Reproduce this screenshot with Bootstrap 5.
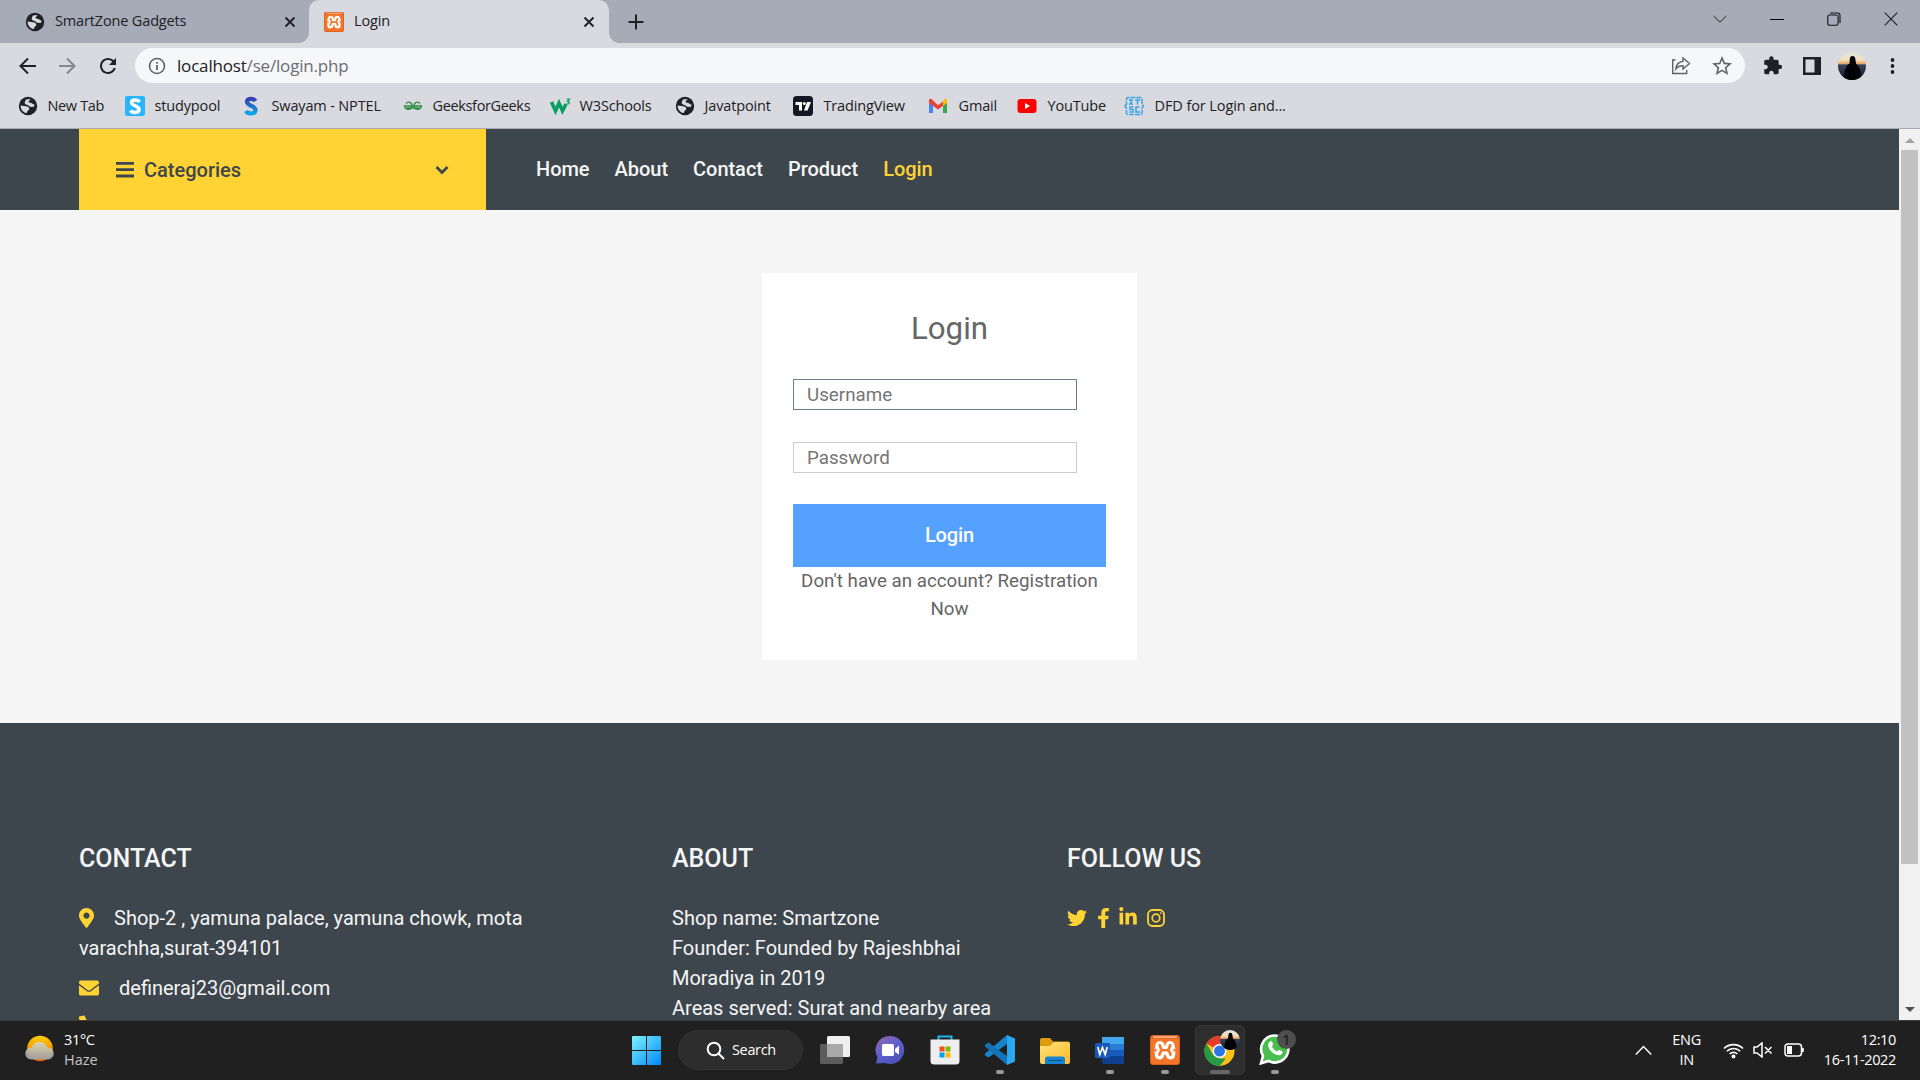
<!DOCTYPE html>
<html lang="en">
<head>
<meta charset="utf-8">
<title>Login</title>
<link rel="stylesheet" href="https://cdn.jsdelivr.net/npm/bootstrap@5.3.0/dist/css/bootstrap.min.css">
<script src="https://cdn.jsdelivr.net/npm/bootstrap@5.3.0/dist/js/bootstrap.bundle.min.js"></script>
<style>
body{width:1920px;height:1080px;overflow:hidden;font-family:Roboto,sans-serif;display:flex;flex-direction:column}
svg{display:block;flex:none}
.sys{font-family:"Open Sans","Noto Sans",sans-serif;font-size:14.5px;letter-spacing:-.35px;color:#202124;white-space:nowrap}
.tabstrip{height:43px;background:#a7abb8;letter-spacing:-.15px}
.tab-idle{width:309px;padding:0 13px 0 25px}
.tab-live{width:300px;background:#d9dadf;border-radius:10px 10px 0 0;padding:0 14px 0 15px;position:relative}
.tab-idle span,.tab-live span{margin:0 auto 0 10px;padding-bottom:2px}
.tab-live::before,.tab-live::after{content:"";position:absolute;bottom:0;width:10px;height:10px}
.tab-live::before{left:-10px;background:radial-gradient(circle at 0 0,transparent 9.5px,#d9dadf 10px)}
.tab-live::after{right:-10px;background:radial-gradient(circle at 100% 0,transparent 9.5px,#d9dadf 10px)}
.win{padding-right:22px;gap:43px;height:37px}
.toolbar{height:45px;background:#d9dadf;padding:0 19px 0 18px}
.omni{width:1610px;height:35px;border-radius:18px;background:#f5f7f9;margin-left:16px;padding:0 13px}
.url{font-size:17px;letter-spacing:-.18px;margin-left:11px}
.url span{color:#6b6e73}
.bookmarks{height:41px;background:#d9dadf;border-bottom:1px solid #a9abb3;padding:0 0 5px 18px;display:grid;grid-template-columns:107px 117px 161px 147px 125px 118px 135px 89px 107px 180px;align-items:center;letter-spacing:-.15px}
.bookmarks>div{display:flex;gap:9.5px;align-items:center}
.bookmarks .snug{letter-spacing:-.35px}
.viewport{height:891px}
.page{width:1899px;background:#f5f5f5;overflow:hidden}
.topnav{height:81px;background:#3d464d;padding-left:79px}
.cats{width:407px;background:#ffd333;color:#3d464d;font-size:20px;font-weight:500;padding:0 37px}
.cats span{margin:0 auto 0 10px}
.menu{padding:0 0 2px 50px;gap:25px;font-size:20px;font-weight:500;letter-spacing:-.03px;color:#f5f5f5}
.menu a{color:inherit;text-decoration:none}
.menu a.on{color:#ffd333}
.stage{height:513px;padding-top:63px}
.login{width:375px;height:387px;background:#fff;padding:34px 31px 0;color:#666;font-size:18.75px;line-height:28px}
.login h1{font-size:31.25px;font-weight:400;line-height:44px;margin:0 0 28px}
.login input{display:block;width:284px;height:31px;border:1px solid #ccc;padding:0 13px;font-size:18.75px;color:#555;outline:0;margin-bottom:32px;border-radius:0;background:#fff}
.login input.first{border-color:#6c7e94}
.login input::placeholder{color:#757575;opacity:1}
.login .go{height:63px;width:313px;background:#55a1ff;color:#fff;border:0;border-radius:0;font-size:20px;font-weight:500;letter-spacing:-.1px;margin-top:-1px;padding-bottom:2px}
.foot{height:297px;background:#3d464d;color:#f5f5f5;padding:120px 0 0 79px;font-size:20px;line-height:30px;overflow:hidden}
.foot h5{font-size:25px;font-weight:500;line-height:32px;margin:0 0 28px}
.foot svg{fill:#ffd333}
.c1{width:593px}.c2{width:395px}
.scroll{width:21px;background:#f1f1f1;padding:9px 0 8px}
.thumb{width:17px;height:714px;background:#c1c1c1;margin-top:7px}
.taskbar{height:60px;background:#202020;border-top:1px solid #3c3c3c;color:#fff;padding:0 24px 1px}
.taskbar .sys{color:#fff;line-height:20px}
.weather{width:594px}
.searchpill{width:125px;height:40px;border-radius:20px;background:#2d2d2d;border:1px solid #343434;margin:0 4px 0 17px;padding-left:27px;gap:7px}
.app{width:55px;height:58px;position:relative;display:flex;align-items:center;justify-content:center}
.app.run::after{content:"";position:absolute;bottom:5px;width:8px;height:4px;border-radius:2px;background:#999}
.app.now::before{content:"";position:absolute;inset:4px 2px 4px 3px;background:#2e2e2e;border:1px solid #353535;border-radius:5px}
.app.now::after{width:20px;background:#666}
.app svg{position:relative}
.tray svg{stroke:#fff;fill:none}
</style>
</head>
<body>
<svg width="0" height="0" class="position-absolute">
<defs>
<symbol id="globe" viewBox="0 0 20 20"><circle cx="10" cy="10" r="9.2" fill="#202124"/><path d="M8 3.400 12.400 3c-.3 1.500-1.800 1.400-1.800 2.700 0 1 1 .9 2.200 1.100 1.700.3 2 1.800 3.600 1.700.2 1-.2 2-.8 2.400-1.900-.3-2.800.5-4.300-.7C10.600 8.800 9 9 7.600 8.200 6 7.400 6.800 5.200 8 3.400zM2.600 9.400l5.600.9c1.500.3 3.100 1.100 3.100 2.500 0 1.200-1.300 1.300-1.700 2.300-.3.800-.5 1.800-1.400 1.900C5 16 2.400 13 2.600 9.400z" fill="#d9dadf"/></symbol>
<symbol id="cross" viewBox="0 0 12 12"><path d="M1.500 1.500l9 9m0-9l-9 9" stroke="#202124" stroke-width="1.900"/></symbol>
<symbol id="xampp" viewBox="0 0 30 30"><rect width="30" height="30" rx="3" fill="#d95f14"/><rect x="1" y="3.500" width="28" height="25.500" rx="2" fill="#f5762a"/><rect x="3" y="1" width="24" height="2" fill="#f2a77c"/><g fill="none" stroke-linecap="round" stroke-linejoin="round"><path d="M10 10.500Q8.500 15 9.500 20M20 10.500Q21.500 15 20.500 20M10 15.300h10" stroke="#fff" stroke-width="9.200"/><path d="M9.800 10.300Q10.500 13 12 15.300 10 17 9.500 19.700M20.200 10.300Q19.500 13 18 15.300 20 17 20.500 19.700M12 15.300h6" stroke="#f5762a" stroke-width="2.600"/></g><path d="M3 15.300l3.500-1.800v3.600zM27 15.300l-3.500-1.800v3.600z" fill="#f5762a"/></symbol>
<clipPath id="disc"><circle cx="14" cy="14" r="14"/></clipPath>
<linearGradient id="dusk" x2="0" y2="1"><stop offset="0" stop-color="#dfe3e4"/><stop offset=".28" stop-color="#f2e2bd"/><stop offset=".42" stop-color="#e8a469"/><stop offset=".46" stop-color="#34435c"/><stop offset="1" stop-color="#111827"/></linearGradient>
<symbol id="face" viewBox="0 0 28 28"><g clip-path="url(#disc)"><path d="M0 0h28v28H0z" fill="url(#dusk)"/><path d="M14.500 4c2 0 3 1.700 3 4l.6 4c3 1.500 4.400 6 4.900 11l1 5H5l1.500-7c.5-4 2-8 5-9.300l.2-3.700c.1-2.400.9-4 2.800-4z" fill="#020306"/></g></symbol>
<linearGradient id="winb" x2="1" y2="1"><stop offset="0" stop-color="#7cf3ff"/><stop offset="1" stop-color="#0088f8"/></linearGradient>
<linearGradient id="chat" x1="0" y1="0" x2=".6" y2="1"><stop offset="0" stop-color="#9267a9"/><stop offset=".6" stop-color="#5b5fd0"/><stop offset="1" stop-color="#4f52b8"/></linearGradient>
<linearGradient id="fold" x2="1" y2="1"><stop offset="0" stop-color="#ffe17b"/><stop offset="1" stop-color="#f9bd28"/></linearGradient>
<linearGradient id="sun" x2="0" y2="1"><stop offset="0" stop-color="#ffd000"/><stop offset="1" stop-color="#f25c05"/></linearGradient>
<linearGradient id="cloud" x2="0" y2="1"><stop offset="0" stop-color="#d8d7bd"/><stop offset="1" stop-color="#9aa3ab"/></linearGradient>
<linearGradient id="sway" x2="0" y2="1"><stop offset="0" stop-color="#353eb0"/><stop offset="1" stop-color="#08a4e8"/></linearGradient>
</defs></svg>

<div class="tabstrip d-flex sys">
  <div class="tab-idle d-flex align-items-center"><svg width="20" height="20"><use href="#globe"/></svg><span>SmartZone Gadgets</span><svg width="12" height="12"><use href="#cross"/></svg></div>
  <div class="tab-live d-flex align-items-center"><svg width="20" height="20"><use href="#xampp"/></svg><span>Login</span><svg width="12" height="12"><use href="#cross"/></svg></div>
  <div class="d-flex align-items-center ps-3"><svg style="margin-left:3px" width="16" height="16"><path d="M8 .5v15M.5 8h15" stroke="#202124" stroke-width="2"/></svg></div>
  <div class="win ms-auto d-flex align-items-center">
    <svg width="14" height="14" fill="none" stroke="#222"><path d="M.7 4L7 10.200 13.300 4"/></svg>
    <svg width="14" height="14"><path d="M0 7.500h14" stroke="#000"/></svg>
    <svg width="14" height="14" fill="none" stroke="#111" stroke-width="1.100"><rect x=".8" y="3" width="10.300" height="10.300" rx="1.800"/><path d="M3 1h7.300Q13 1 13 3.700V11"/></svg>
    <svg width="14" height="14"><path d="M.7.7l12.600 12.600m0-12.600L.7 13.300" stroke="#222" stroke-width="1.100"/></svg>
  </div>
</div>

<div class="toolbar d-flex align-items-center sys">
  <svg width="20" height="20" fill="none" stroke="#202124" stroke-width="2"><path d="M18 10H3M10 2.500L2.500 10l7.500 7.500"/></svg>
  <svg style="margin-left:20px" width="20" height="20" fill="none" stroke="#85888e" stroke-width="2"><path d="M1 10h15M9 2.500l7.500 7.500L9 17.500"/></svg>
  <svg style="margin-left:19px" width="22" height="22" viewBox="1 1 22 22"><path d="M17.650 6.350C16.200 4.900 14.210 4 12 4c-4.420 0-7.990 3.580-7.990 8s3.570 8 7.990 8c3.730 0 6.840-2.550 7.730-6h-2.080c-.82 2.330-3.040 4-5.650 4-3.310 0-6-2.690-6-6s2.690-6 6-6c1.660 0 3.140.69 4.220 1.780L13 11h7V4z" fill="#202124"/></svg>
  <div class="omni d-flex align-items-center">
    <svg width="18" height="18"><circle cx="9" cy="9" r="7.500" fill="none" stroke="#5f6368" stroke-width="1.600"/><path d="M9 8v5M9 5v1.700" stroke="#5f6368" stroke-width="1.800"/></svg>
    <div class="url me-auto">localhost<span>/se/login.php</span></div>
    <svg width="20" height="20" fill="none" stroke="#5f6368" stroke-width="1.400"><path d="M4.500 4H1.700v13.500h14V14M12 2l6.500 5.500L12 13V9.800C8.500 9.800 6.400 10.800 4.800 13 5.200 9 7.500 5.800 12 5.200z"/></svg>
    <svg style="margin:0 -2px 0 17px" width="26" height="22" viewBox="-2 1 26 22"><path d="M22 9.240l-7.190-.62L12 2 9.190 8.630 2 9.240l5.460 4.730L5.820 21 12 17.270 18.180 21l-1.630-7.030L22 9.240zM12 15.400l-3.760 2.270 1-4.280-3.320-2.880 4.380-.38L12 6.100l1.710 4.040 4.380.38-3.320 2.880 1 4.280L12 15.400z" fill="#5f6368"/></svg>
  </div>
  <svg style="margin-left:17px" width="22" height="22" viewBox="1 1 22 22"><path d="M20.500 11H19V7c0-1.100-.9-2-2-2h-4V3.500C13 2.120 11.880 1 10.500 1S8 2.120 8 3.500V5H4c-1.100 0-1.990.9-1.990 2v3.800H3.500c1.490 0 2.700 1.210 2.700 2.700s-1.210 2.700-2.700 2.700H2V20c0 1.100.9 2 2 2h3.800v-1.500c0-1.490 1.210-2.700 2.700-2.700 1.490 0 2.700 1.210 2.700 2.700V22H17c1.100 0 2-.9 2-2v-4h1.500c1.380 0 2.500-1.120 2.500-2.500S21.880 11 20.500 11z" fill="#202124" transform="translate(1.500 1.500) scale(.85)"/></svg>
  <svg style="margin-left:19px" width="18" height="18"><path d="M0 0h18v18H0zM2.500 2.500v13h9v-13z" fill="#202124" fill-rule="evenodd"/></svg>
  <svg style="margin-left:17px" width="28" height="28"><use href="#face"/></svg>
  <svg class="ms-auto me-1" width="8" height="20" fill="#202124"><circle cx="3.500" cy="4" r="1.900"/><circle cx="3.500" cy="10" r="1.900"/><circle cx="3.500" cy="16" r="1.900"/></svg>
</div>

<div class="bookmarks sys">
  <div class="snug"><svg width="20" height="20"><use href="#globe"/></svg>New Tab</div>
  <div><svg width="20" height="20"><rect width="20" height="20" rx="2" fill="#27b5fb"/><path d="M14.500 6C13 3.500 6.500 3 6.500 6.500c0 3.500 7.500 3 7.500 7s-7 3.500-8.500 1" fill="none" stroke="#fff" stroke-width="3.500"/></svg>studypool</div>
  <div><svg width="18" height="20"><path d="M13.500 5C11.500 2 5 2 5 6c0 4 8.500 3.500 8.500 8s-7.500 4.500-9.500 1" fill="none" stroke="url(#sway)" stroke-width="4.200"/></svg><span style="margin-left:2px">Swayam - NPTEL</span></div>
  <div class="snug"><svg width="20" height="20" fill="none" stroke="#2f8d46" stroke-width="1.300"><path d="M3 7.500C5 5 9 6 9 10c0 4.500-7 4.500-7.500 0h17c-.5 4.500-7.500 4.500-7.500 0 0-4 4-5 6-2.500M3.500 12h13" /></svg>GeeksforGeeks</div>
  <div><svg width="22" height="20" fill="none" stroke="#079e63"><path d="M1.500 6l4 9 3.500-8 3.500 8 3.500-7" stroke-width="3.500"/><path d="M16.500 3h3l-2 2.300c2.800-.2 2.500 3.500-.8 2.300" stroke-width="1.200"/></svg><span style="margin-left:-2px">W3Schools</span></div>
  <div><svg width="20" height="20"><use href="#globe"/></svg>Javatpoint</div>
  <div><svg width="20" height="20"><rect width="20" height="20" rx="3.500" fill="#141824"/><path d="M2.500 6H9v8.500H6V9H2.500zM14 6h4l-3.500 8.500H11z" fill="#fff"/><circle cx="11.300" cy="7.500" r="1.500" fill="#fff"/></svg><span style="margin-left:1px">TradingView</span></div>
  <div><svg width="20" height="20"><path d="M1 4.500V17h4V8z" fill="#4285f4"/><path d="M15 8v9h4V4.500z" fill="#34a853"/><path d="M15 5.500V10l4-3V4.500c0-1.500-1.500-2.200-2.700-1.200z" fill="#fbbc04"/><path d="M1 4.500V7l9 6.500 5-3.700V5.500l-5 3.700-6.300-5.900C2.500 2.300 1 3 1 4.500z" fill="#ea4335"/></svg><span style="margin-left:1px">Gmail</span></div>
  <div><svg width="20" height="20"><rect x=".5" y="3" width="19" height="14" rx="3" fill="red"/><path d="M8 7l5 3-5 3z" fill="#fff"/></svg><span style="margin-left:1px">YouTube</span></div>
  <div style="letter-spacing:-.1px"><svg width="20" height="20" fill="none" stroke="#3ba3e4" stroke-width="1.500"><path d="M1 10l1.500-2V3q0-1.500 1.500-1.500h12.500Q18 1.500 18 3v5l1.500 2-1.500 2v5q0 1.500-1.500 1.500H4Q2.500 18.500 2.500 17v-5z" stroke-dasharray="5 1"/><path d="M5 4h4M7 4v4M5 8h4m2-4h5m-2.500 0v4.500M9.500 11H6v2.500h3V16H5.500m10-5H12v5h4"/></svg><span style="margin-left:1px">DFD for Login and...</span></div>
</div>

<div class="viewport d-flex">
 <main class="page">
  <nav class="topnav d-flex">
   <div class="cats d-flex align-items-center"><svg width="18" height="18" fill="#3d464d"><path d="M0 1h18v2.800H0zM0 7.300h18v2.800H0zM0 13.600h18v2.800H0z"/></svg><span>Categories</span><svg width="14" height="10"><path d="M1.500 2L7 7.500 12.500 2" fill="none" stroke="#3d464d" stroke-width="2.800"/></svg></div>
   <div class="menu d-flex align-items-center"><a href="#">Home</a><a href="#">About</a><a href="#">Contact</a><a href="#">Product</a><a href="#" class="on">Login</a></div>
  </nav>
  <section class="stage">
   <form class="login mx-auto text-center">
    <h1>Login</h1>
    <input class="first" type="text" placeholder="Username">
    <input type="password" placeholder="Password">
    <button type="button" class="go d-block">Login</button>
    <div>Don't have an account? Registration Now</div>
   </form>
  </section>
  <footer class="foot d-flex">
   <div class="c1"><h5>CONTACT</h5>
    <div class="mb-2"><svg class="d-inline-block align-baseline" style="margin:0 20px -3px 0" width="15" height="20" viewBox="0 0 384 512"><path d="M172.268 501.670C26.970 291.031 0 269.413 0 192 0 85.961 85.961 0 192 0s192 85.961 192 192c0 77.413-26.970 99.031-172.268 309.670-9.535 13.774-29.930 13.773-39.464 0zM192 272c44.183 0 80-35.817 80-80s-35.817-80-80-80-80 35.817-80 80 35.817 80 80 80z"/></svg>Shop-2 , yamuna palace, yamuna chowk, mota<br>varachha,surat-394101</div>
    <div class="mb-2 d-flex align-items-center" style="margin-top:10px"><svg style="margin-right:20px" width="20" height="20" viewBox="0 0 512 512"><path d="M502.300 190.800c3.900-3.100 9.700-.2 9.700 4.700V400c0 26.500-21.500 48-48 48H48c-26.500 0-48-21.500-48-48V195.600c0-5 5.700-7.800 9.700-4.700 22.400 17.400 52.100 39.500 154.100 113.600 21.100 15.400 56.700 47.800 92.200 47.600 35.700.3 72-32.800 92.300-47.600 102-74.100 131.600-96.300 154-113.700zM256 320c23.200.4 56.600-29.200 73.400-41.400 132.700-96.300 142.800-104.700 173.400-128.700 5.800-4.500 9.200-11.500 9.200-18.900v-19c0-26.500-21.500-48-48-48H48c-26.500 0-48 21.500-48 48v19c0 7.400 3.400 14.300 9.200 18.900 30.600 23.900 40.700 32.400 173.400 128.700 16.800 12.200 50.200 41.800 73.400 41.400z"/></svg>defineraj23@gmail.com</div>
    <svg class="mt-1" width="20" height="20" style="overflow:visible"><path d="M0 5.500L5.500 4.500 8 10 6 12c1 3 3 5 6 6l2-2 5.500 2L18 23C8 24 0 16 0 5.500z"/></svg>
   </div>
   <div class="c2"><h5>ABOUT</h5><div>Shop name: Smartzone<br>Founder: Founded by Rajeshbhai<br>Moradiya in 2019<br>Areas served: Surat and nearby area</div></div>
   <div><h5>FOLLOW US</h5>
    <div class="d-flex align-items-center" style="height:29px">
     <svg width="20" height="20" viewBox="0 0 512 512"><path d="M459.370 151.716c.325 4.548.325 9.097.325 13.645 0 138.720-105.583 298.558-298.558 298.558-59.452 0-114.680-17.219-161.137-47.106 8.447.974 16.568 1.299 25.340 1.299 49.055 0 94.213-16.568 130.274-44.832-46.132-.975-84.792-31.188-98.112-72.772 6.498.974 12.995 1.624 19.818 1.624 9.421 0 18.843-1.300 27.614-3.573-48.081-9.747-84.143-51.980-84.143-102.985v-1.299c13.969 7.797 30.214 12.670 47.431 13.319-28.264-18.843-46.781-51.005-46.781-87.391 0-19.492 5.197-37.360 14.294-52.954 51.655 63.675 129.300 105.258 216.365 109.807-1.624-7.797-2.599-15.918-2.599-24.040 0-57.828 46.782-104.934 104.934-104.934 30.213 0 57.502 12.670 76.670 33.137 23.715-4.548 46.456-13.320 66.599-25.340-7.798 24.366-24.366 44.833-46.132 57.827 21.117-2.273 41.584-8.122 60.426-16.243-14.292 20.791-32.161 39.308-52.628 54.253z"/></svg>
     <svg style="margin-left:10px" width="13" height="20" viewBox="0 0 320 512"><path d="M279.140 288l14.220-92.660h-88.910v-60.130c0-25.350 12.420-50.060 52.240-50.060h40.420V6.260S260.430 0 225.360 0c-73.220 0-121.080 44.380-121.080 124.720v70.620H22.890V288h81.390v224h100.170V288z"/></svg>
     <svg style="margin:-2px 0 0 9px" width="18" height="20" viewBox="0 0 448 512"><path d="M100.280 448H7.400V148.900h92.880zM53.790 108.100C24.090 108.100 0 83.500 0 53.800a53.790 53.790 0 0 1 107.580 0c0 29.700-24.100 54.300-53.790 54.300zM447.900 448h-92.680V302.400c0-34.700-.7-79.200-48.290-79.200-48.290 0-55.690 37.700-55.690 76.700V448h-92.780V148.900h89.080v40.800h1.300c12.400-23.500 42.690-48.300 87.880-48.300 94 0 111.280 61.900 111.280 142.300V448z"/></svg>
     <svg style="margin-left:10px;fill:none" width="18" height="18" stroke="#ffd333"><rect x="1" y="1" width="16" height="16" rx="4.500" stroke-width="1.800"/><circle cx="9" cy="9" r="3.800" stroke-width="1.700"/><circle cx="13.700" cy="4.300" r=".6"/></svg>
    </div></div>
  </footer>
 </main>
 <div class="scroll d-flex flex-column align-items-center">
  <svg width="10" height="5"><path d="M5 0l5 5H0z" fill="#a3a3a3"/></svg><div class="thumb"></div><svg class="mt-auto" width="10" height="5"><path d="M0 0h10L5 5z" fill="#505050"/></svg>
 </div>
</div>

<div class="taskbar d-flex align-items-center">
 <div class="weather d-flex align-items-center"><svg width="31" height="34"><circle cx="16" cy="15.500" r="12.800" fill="url(#sun)"/><path d="M7 26.500a6 6 0 0 1 .5-12 8.500 8.500 0 0 1 16 0A6 6 0 0 1 24 26.500z" fill="url(#cloud)" opacity=".9"/></svg><div class="sys" style="margin-left:9px">31°C<br><span style="color:#c4c4c4;letter-spacing:0">Haze</span></div></div>
 <div class="d-flex align-items-center">
  <svg style="margin-left:14px" width="29" height="29" fill="url(#winb)" viewBox="0 0 29 29"><path d="M1 0h13v14H0V1q0-1 1-1zM15 0h13q1 0 1 1v13H15zM0 15h14v14H1q-1 0-1-1zM15 15h14v13q0 1-1 1H15z"/></svg>
  <div class="searchpill d-flex align-items-center sys"><svg width="19" height="19" fill="none" stroke="#fff" stroke-width="2"><circle cx="8" cy="8" r="6.300"/><path d="M12.500 12.500l5.500 5.500"/></svg>Search</div>
  <div class="app"><svg width="30" height="28"><rect y="8" width="23" height="20" rx="1.500" fill="#5c5c5c"/><rect x="7" width="23" height="21" rx="1.500" fill="#efefef"/><path d="M7 8h16v13H7z" fill="#a8a8a8"/></svg></div>
  <div class="app"><svg width="30" height="30"><path d="M15 1a14 14 0 1 1-5 27l-9 .5 1.500-6.500A14 14 0 0 1 15 1z" fill="url(#chat)"/><rect x="7" y="9" width="12" height="12" rx="1.500" fill="#fff"/><path d="M20 14l4-3.500v9L20 17z" fill="#fff"/></svg></div>
  <div class="app"><svg width="30" height="30"><path d="M8.500 6V1.500h13V6" fill="none" stroke="#22b4f0" stroke-width="2"/><path d="M.5 4.500h29V26q0 3.500-3.500 3.500H4Q.5 29.500.5 26z" fill="#eee"/><path d="M9.500 11.500h5v5h-5z" fill="#f25022"/><path d="M15.500 11.500h5v5h-5z" fill="#7fba00"/><path d="M9.500 17.500h5v5h-5z" fill="#00a4ef"/><path d="M15.500 17.500h5v5h-5z" fill="#ffb900"/></svg></div>
  <div class="app run"><svg width="30" height="30"><path d="M22 0v9L3.500 22.500 0 20.500v-2z" fill="#1683cb"/><path d="M22 30v-9L3.500 7.500 0 9.500v2z" fill="#1672b6"/><path d="M22 0l8 3.500v23L22 30z" fill="#29a8f0"/></svg></div>
  <div class="app"><svg width="30" height="28"><path d="M0 4q0-2 2-2h8l3 3.500h15q2 0 2 2V12H0z" fill="#dc9c0c"/><path d="M0 10h10l4-4h14q2 0 2 2v18q0 2-2 2H2q-2 0-2-2z" fill="url(#fold)"/><path d="M5 28v-5q0-2.500 2.500-2.500h15q2.500 0 2.500 2.500v5z" fill="#1683d3"/><path d="M8 24.500h14" stroke="#074f87"/></svg></div>
  <div class="app run"><svg width="30" height="30"><path d="M7 2h22v7H7z" fill="#42a5ee"/><path d="M7 9h22v7H7z" fill="#2b7cd3"/><path d="M7 15h22v7H7z" fill="#185abd"/><path d="M7 21h22v8H9q-2 0-2-2z" fill="#103f91"/><rect y="8" width="15" height="15" rx="1.500" fill="#1858b8"/><path d="M2.800 12l2 7.500 2.700-7 2.700 7 2-7.500" fill="none" stroke="#fff" stroke-width="1.700"/></svg></div>
  <div class="app run"><svg width="30" height="30"><use href="#xampp"/></svg></div>
  <div class="app run now"><svg width="40" height="40" viewBox="-3 -6 40 40" style="left:3px;top:-2px"><circle cx="13.500" cy="17" r="15" fill="#fbc116"/><path d="M13.500 17L.5 9.500A15 15 0 0 1 26.500 9.500H13.500z" fill="#e33b2e"/><path d="M.5 9.500L7 20.700 13.500 24.500h6.500L13.500 32A15 15 0 0 1 .5 9.500z" fill="#249a45"/><circle cx="13.500" cy="17" r="7" fill="#fff"/><circle cx="13.500" cy="17" r="5.500" fill="#2b75e8"/><svg x="14" y="-4" width="20" height="20"><use href="#face"/></svg></svg></div>
  <div class="app run"><svg width="38" height="38" style="left:2px;top:-3px"><path d="M17 7.500a13.500 13.500 0 1 1-6.300 25.500L3 35.300l2-7.500A13.500 13.500 0 0 1 17 7.500z" fill="#49bd4d" stroke="#fff" stroke-width="2.600"/><path d="M11 14.500c2-2.500 3-2 4 1.500.4 1-.7 1.800-1 2.500 1.200 2.500 3 4 5.200 5 .8-.5 1.300-1.800 2.300-1.400 3.500 1.500 3.800 2 2.500 3.600-3.500 3.500-8.500 0-10.700-2.200-2.500-2.800-4.300-6-2.300-9z" fill="#fff"/><circle cx="28.500" cy="11.500" r="9.500" fill="#4e4e4e"/><text x="28.500" y="17" text-anchor="middle" font-family="Open Sans" font-size="14.500" fill="#111">1</text></svg></div>
 </div>
 <div class="tray ms-auto d-flex align-items-center sys">
  <svg width="17" height="11" stroke-width="1.500"><path d="M.8 9.500L8.500 1.500l7.700 8"/></svg>
  <div class="text-center" style="margin-left:20px">ENG<br>IN</div>
  <svg style="margin-left:22px" width="21" height="17" stroke-width="1.600"><path d="M1 6.500a13.500 13.500 0 0 1 19 0M3.800 9.200a9.500 9.500 0 0 1 13.400 0M6.600 12a5.500 5.500 0 0 1 7.800 0"/><circle cx="10.500" cy="14.500" r="1.200" fill="#fff"/></svg>
  <svg style="margin-left:9px" width="20" height="16" stroke-width="1.500"><path d="M1 5h3l5-4v14l-5-4H1zM12 5l6.500 6.500m0-6.500L12 11.500"/></svg>
  <svg style="margin-left:11px" width="21" height="14" stroke-width="1.500"><rect x="1" y="1" width="16.500" height="12" rx="3"/><path d="M3 3h5v8H3z" fill="#fff" stroke="none"/><path d="M18.500 5v4" stroke-width="2.500"/></svg>
  <div class="text-end" style="margin-left:19px">12:10<br>16-11-2022</div>
 </div>
</div>
</body>
</html>
